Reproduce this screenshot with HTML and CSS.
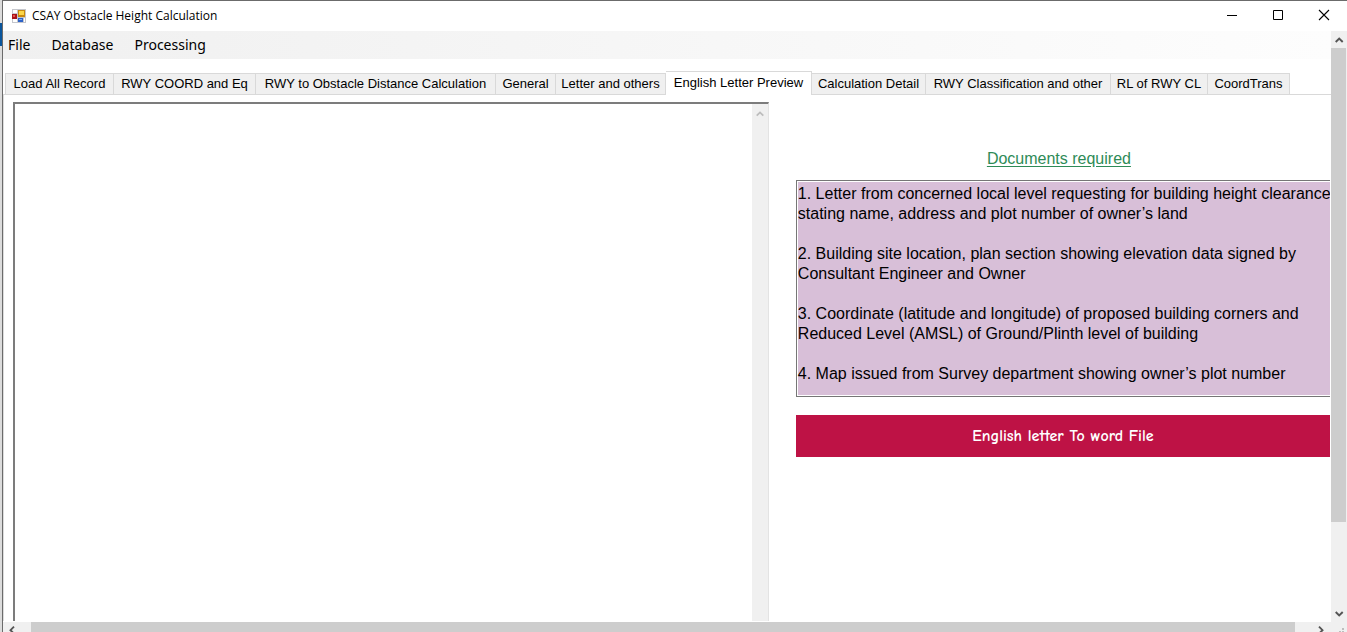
FILE: index.html
```html
<!DOCTYPE html>
<html lang="en">
<head>
<meta charset="utf-8">
<title>CSAY Obstacle Height Calculation</title>
<link rel="stylesheet" href="styles.css">
</head>
<body>
<div class="desktop-edge"><span class="edge-accent"></span></div>
<div class="window">
  <header class="titlebar">
    <svg class="app-icon" width="14" height="14" viewBox="0 0 14 14" aria-hidden="true">
      <path fill="#c4c6cc" d="M0 0h14v14H0z"/>
      <path fill="#fff" d="M1 1h4v3H1zM1 10h4v3H1zM12 9h1v4h-1z"/>
      <path fill="#a8141c" d="M0 5h5v5H0z"/><path fill="#e8584c" d="M1 6h2v2H1z"/>
      <path fill="#c88a10" d="M6 1h7v7H6z"/><path fill="#fcd648" d="M7 2h5v4H7z"/>
      <path fill="#2c62c8" d="M6 9h5v4H6z"/><path fill="#78aaf8" d="M7 10h3v1H7z"/>
    </svg>
    <h1 class="title">CSAY Obstacle Height Calculation</h1>
    <div class="controls">
      <button class="control" type="button" aria-label="Minimize"><svg width="12" height="12" viewBox="0 0 12 12"><path d="M1 6.500h10" stroke="#000" fill="none"/></svg></button>
      <button class="control" type="button" aria-label="Maximize"><svg width="12" height="12" viewBox="0 0 12 12"><path d="M1.500 1.500h9v9h-9z" stroke="#000" fill="none"/></svg></button>
      <button class="control" type="button" aria-label="Close"><svg width="12" height="12" viewBox="0 0 12 12"><path d="M1 1l10 10M11 1l-10 10" stroke="#000" stroke-width="1.100" fill="none"/></svg></button>
    </div>
  </header>
  <div class="client">
    <main class="content">
      <nav class="menubar">
        <button class="menu" type="button">File</button>
        <button class="menu" type="button">Database</button>
        <button class="menu" type="button">Processing</button>
      </nav>
      <div class="tabs" role="tablist">
        <button class="tab" type="button" role="tab">Load All Record</button>
        <button class="tab" type="button" role="tab">RWY COORD and Eq</button>
        <button class="tab" type="button" role="tab">RWY to Obstacle Distance Calculation</button>
        <button class="tab" type="button" role="tab">General</button>
        <button class="tab" type="button" role="tab">Letter and others</button>
        <button class="tab active" type="button" role="tab" aria-selected="true">English Letter Preview</button>
        <button class="tab" type="button" role="tab">Calculation Detail</button>
        <button class="tab" type="button" role="tab">RWY Classification and other</button>
        <button class="tab" type="button" role="tab">RL of RWY CL</button>
        <button class="tab" type="button" role="tab">CoordTrans</button>
      </div>
      <section class="page" role="tabpanel">
        <div class="preview">
          <textarea class="preview-text" aria-label="English letter preview"></textarea>
          <div class="preview-scroll">
            <svg width="8" height="6" viewBox="0 0 8 6"><path d="M.7 4.700L4 1.400l3.300 3.300" stroke="#bdbdbd" stroke-width="1.800" fill="none"/></svg>
          </div>
        </div>
        <div class="side">
          <label class="docs-label" for="docs">Documents required</label>
          <textarea class="docs" id="docs" rows="10" wrap="off">1. Letter from concerned local level requesting for building height clearance
stating name, address and plot number of owner’s land

2. Building site location, plan section showing elevation data signed by
Consultant Engineer and Owner

3. Coordinate (latitude and longitude) of proposed building corners and
Reduced Level (AMSL) of Ground/Plinth level of building

4. Map issued from Survey department showing owner’s plot number</textarea>
          <button class="export" type="button">English letter To word File</button>
        </div>
      </section>
    </main>
    <div class="vscroll">
      <button class="arrow" type="button" aria-label="Scroll up"><svg width="9" height="6" viewBox="0 0 9 6"><path d="M.7 5L4.200 1.500l3.500 3.500" stroke="#555" stroke-width="1.900" fill="none"/></svg></button>
      <div class="vtrack"><div class="vthumb"></div><div class="vrest"></div></div>
      <button class="arrow" type="button" aria-label="Scroll down"><svg width="9" height="6" viewBox="0 0 9 6"><path d="M.7 1L4.200 4.500l3.500-3.500" stroke="#555" stroke-width="1.900" fill="none"/></svg></button>
    </div>
  </div>
  <div class="hscroll">
    <button class="arrow" type="button" aria-label="Scroll left"><svg width="6" height="9" viewBox="0 0 6 9"><path d="M5 .7L1.500 4.200l3.500 3.500" stroke="#555" stroke-width="1.900" fill="none"/></svg></button>
    <div class="htrack"><div class="hthumb"></div></div>
    <button class="arrow" type="button" aria-label="Scroll right"><svg width="6" height="9" viewBox="0 0 6 9"><path d="M1 .7l3.500 3.500L1 7.700" stroke="#555" stroke-width="1.900" fill="none"/></svg></button>
    <svg class="grip" width="18" height="17" viewBox="0 0 18 17"><path fill="#bdbdbd" d="M13 6h2v2h-2zM10 9h2v2h-2zM13 9h2v2h-2zM7 12h2v2H7zM10 12h2v2h-2zM13 12h2v2h-2z"/></svg>
  </div>
</div>
</body>
</html>
```
FILE: styles.css
```css
* { box-sizing: border-box; }

body {
  margin: 0;
  height: 100vh;
  display: flex;
  overflow: hidden;
  background: #fff;
  color: #000;
  font-family: "Liberation Sans", Arial, sans-serif;
}

button {
  margin: 0;
  padding: 0;
  border: 0;
  background: none;
  color: inherit;
  font: inherit;
}

textarea {
  margin: 0;
  border: 0;
  resize: none;
  overflow: hidden;
  outline: 0;
}

.desktop-edge { flex: none; width: 2px; padding-top: 23px; background: #dcdcdc; }
.edge-accent { display: block; height: 23px; background: #0a559c; }

/* The window runs slightly past the bottom of the screen. */
.window {
  flex: 1;
  min-width: 0;
  height: calc(100vh + 7px);
  display: flex;
  flex-direction: column;
  border-top: 1px solid #6b6b6b;
  border-left: 1px solid #6b6b6b;
}

.titlebar { flex: none; display: flex; align-items: center; height: 30px; padding-left: 9px; }
.app-icon { flex: none; }
.title {
  flex: 1;
  margin: 0 0 0 6px;
  font: 400 12px/16px "Open Sans", sans-serif;
}
.controls { display: flex; align-self: flex-start; }
.control { display: grid; place-items: center; width: 46px; height: 28px; }

.client { flex: 1; min-height: 0; display: flex; }
.content {
  flex: 1;
  min-width: 0;
  display: flex;
  flex-direction: column;
  border-bottom: 1px solid #fff;
}

.menubar {
  flex: none;
  display: flex;
  gap: 21px;
  height: 28px;
  padding-left: 5px;
  background: linear-gradient(to right, #f0f0f0, #fdfdfd);
  font: 14px/28px "Noto Sans", sans-serif;
}

.tabs {
  flex: none;
  display: grid;
  grid-template-columns: 109px 142px 240px 60px 110px 146px 114px 185px 97px 82px;
  align-items: end;
  height: 36px;
  padding-left: 2px;
  border-bottom: 1px solid #d9d9d9;
  font-size: 13px;
  line-height: 20px;
}
.tab {
  height: 21px;
  border: solid #d9d9d9;
  border-width: 1px 1px 0 0;
  background: #f0f0f0;
  text-align: center;
  white-space: nowrap;
}
.tab:first-child { border-left-width: 1px; }
.tab.active { height: 24px; margin-bottom: -1px; padding-bottom: 2px; background: #fff; }

.page {
  flex: 1;
  min-height: 0;
  display: flex;
  gap: 27px;
  padding: 7px 1px 0 9px;
  border-left: 1px solid #dcdcdc;
}

.preview {
  flex: 754;
  min-width: 0;
  display: flex;
  border: solid #696969;
  border-width: 2px 1px 0 2px;
  border-color: #7c7c7c #e3e3e3 #fff #7c7c7c;
}
.preview-text { flex: 1; min-width: 0; background: #fff; }
.preview-scroll { flex: none; width: 16px; padding-top: 5px; background: #f0f0f0; text-align: center; line-height: 6px; }

.side { flex: 535; min-width: 0; display: flex; flex-direction: column; }
.docs-label {
  margin: 47px 8px 11px 0;
  color: #2e8b57;
  font-size: 16px;
  line-height: 20px;
  text-align: center;
  text-decoration: underline;
  text-underline-offset: 2px;
}
.docs {
  height: 217px;
  padding: 3px 0 0 1px;
  border: 1px solid #767676;
  border-right: 0;
  box-shadow: inset 1px 1px #fff, inset 0 -1px #fff;
  background: #d8bfd8;
  color: #000;
  font: 16px/20px "Liberation Sans", Arial, sans-serif;
}
.export {
  height: 42px;
  margin-top: 18px;
  background: #be1245;
  color: #fff;
  font: 700 16px/20px "Comic Sans MS", "Comic Neue", "Noto Sans", sans-serif;
}

.arrow { flex: none; display: grid; place-items: center; width: 17px; height: 17px; }

.vscroll { flex: none; width: 16px; display: flex; flex-direction: column; background: #f0f0f0; }
.vscroll .arrow { width: 16px; }
.vtrack { flex: 1; display: flex; flex-direction: column; }
.vthumb { flex: 474; width: 15px; background: #cdcdcd; }
.vrest { flex: 83; }

.hscroll { flex: none; height: 17px; display: flex; background: #f0f0f0; }
.hscroll .arrow { height: 16px; }
.htrack { flex: 1; padding: 0 17px 0 11px; }
.hthumb { height: 100%; background: #cdcdcd; }
```
